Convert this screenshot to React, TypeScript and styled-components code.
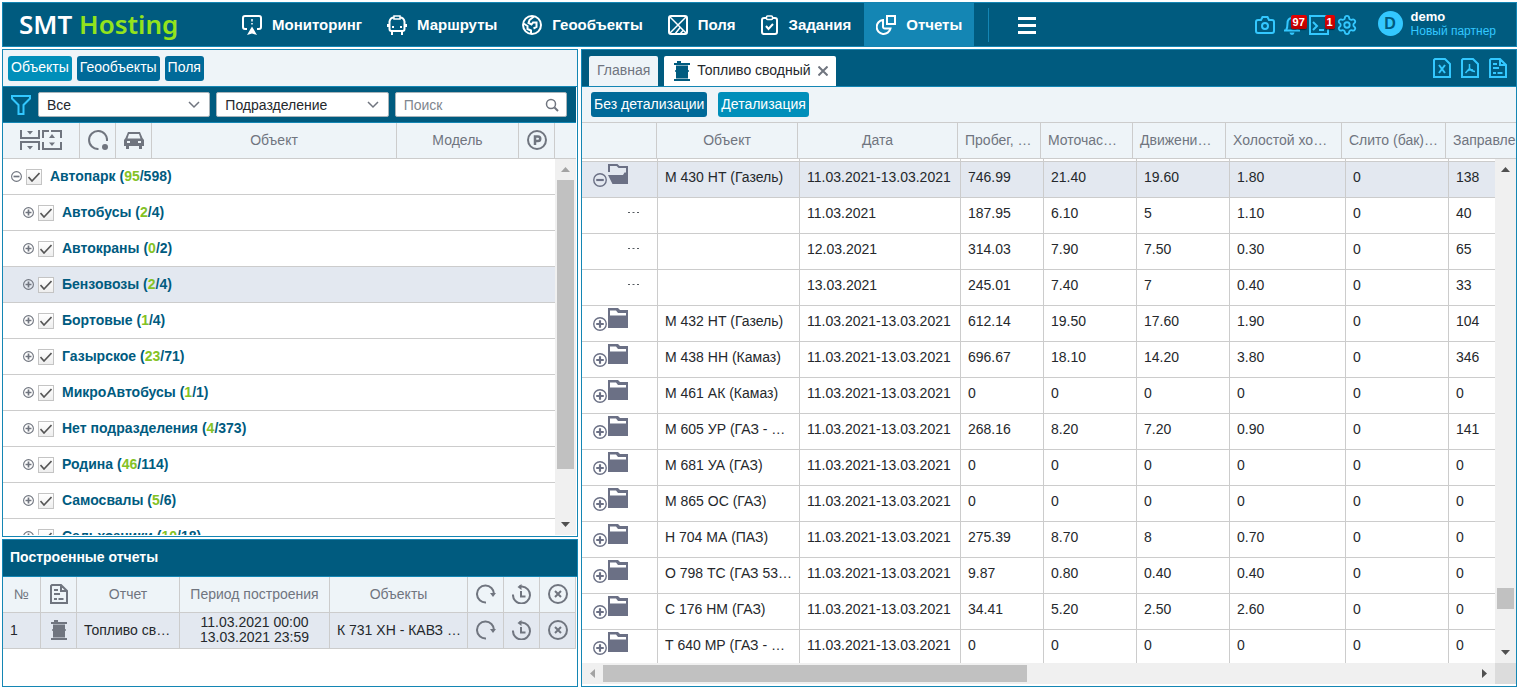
import React from 'react';
import styled, { createGlobalStyle, css } from 'styled-components';
import { Settings } from 'lucide-react';

const color = {
  navy: '#005b7f',
  line: '#1486b4',
  pale: '#eef4f8',
  sky: '#33c8ff',
  grey: '#70757f',
  rule: '#cccccc',
  selected: '#e3e8f0',
  text: '#25282c',
  lime: '#84c225',
};

const GlobalStyle = createGlobalStyle`
  *, *::before, *::after { box-sizing: border-box; }
  body { margin: 0; background: #fff; }
  body, button, input, select, table {
    font-family: "Liberation Sans", Arial, sans-serif;
    font-size: 14px;
    line-height: 16px;
    color: ${color.text};
  }
  button { border: 0; padding: 0; background: none; cursor: pointer; }
  h1, h2, ul, p { margin: 0; padding: 0; }
  ul { list-style: none; }
  a { text-decoration: none; color: inherit; }
  svg { display: block; flex: none; }
`;

/* ---------- icons ---------- */

type IconProps = { w?: number; h?: number; box?: string; sw?: number; children: React.ReactNode };
const Icon = ({ w = 20, h = 20, box, sw = 2, children }: IconProps) => (
  <svg width={w} height={h} viewBox={box ?? `0 0 ${w} ${h}`} fill="none" stroke="currentColor" strokeWidth={sw} aria-hidden="true">
    {children}
  </svg>
);
const fill = { fill: 'currentColor', stroke: 'none' };

const MonitorIcon = () => (
  <Icon>
    <path d="M5 14H3a2 2 0 0 1-2-2V3a2 2 0 0 1 2-2h14a2 2 0 0 1 2 2v9a2 2 0 0 1-2 2h-2" />
    <path d="M10 4v2.500M10 8v1.500" strokeWidth="1.500" />
    <path {...fill} d="M10 11.500L15 20l-5-1.500L5 20z" />
  </Icon>
);
const BusIcon = () => (
  <Icon>
    <path d="M7 2.500C4 2.500 3 4 2.500 6.500V14a2 2 0 0 0 2 2h11a2 2 0 0 0 2-2V6.500C17 4 16 2.500 13 2.500" />
    <path d="M7 1h6v3H7z" strokeWidth="1.500" />
    <path d="M1 9v3M19 9v3M5 16v4M15 16v4" />
    <path {...fill} d="M5 11h2v2H5zM13 11h2v2h-2z" />
  </Icon>
);
const GlobeIcon = () => (
  <Icon>
    <circle cx="10" cy="10" r="9" />
    <path d="M1.500 8.500l4 2.500v3l3.500 1.500v3M12 1.500L7.500 5l-1 3 3 1.500L11 7.500h3.500V12l-3 1.500" />
  </Icon>
);
const FieldIcon = () => (
  <Icon>
    <rect x="1" y="1" width="18" height="18" rx="2" />
    <path d="M2 2l16 16M18 2L2 18M12.500 12L7 19M15.500 15L12 19" strokeWidth="1.500" />
  </Icon>
);
const TaskIcon = () => (
  <Icon w={18}>
    <path d="M5 3H3a2 2 0 0 0-2 2v12a2 2 0 0 0 2 2h11a2 2 0 0 0 2-2V5a2 2 0 0 0-2-2h-2" />
    <rect x="5.500" y="1" width="6" height="3.500" rx="1" strokeWidth="1.500" />
    <path d="M5 11l2.500 3L12 9" />
  </Icon>
);
const ReportIcon = () => (
  <Icon>
    <rect x="11" y="1" width="8" height="8" />
    <path d="M7 5a7 7 0 1 0 7.500 8.500H9A2 2 0 0 1 7 11z" />
  </Icon>
);
const CameraIcon = () => (
  <Icon w={20} h={18}>
    <path d="M3 4h3l1.500-3h5L14 4h3a2 2 0 0 1 2 2v9a2 2 0 0 1-2 2H3a2 2 0 0 1-2-2V6a2 2 0 0 1 2-2z" />
    <circle cx="10" cy="10" r="3" />
  </Icon>
);
const BellIcon = () => (
  <Icon w={18}>
    <path d="M1 15.500h16M3 15.500c1-1.500 1.500-3 1.500-7C4.500 5 6.500 3 9 3s4.500 2 4.500 5.500c0 4 .5 5.500 1.500 7M9 1v2" />
    <path {...fill} d="M6.500 17.500h5a2.500 2.500 0 0 1-5 0z" />
  </Icon>
);
const ConsoleIcon = () => (
  <Icon>
    <rect x="1" y="1" width="18" height="18" />
    <path d="M4 7l4 4-4 4M10 15h5" />
  </Icon>
);
const ExcelIcon = () => (
  <Icon w={18}>
    <path d="M2 1h10l5 5v13H1V2z" />
    <path d="M6 7l6 8M12 7l-6 8" />
  </Icon>
);
const PdfIcon = () => (
  <Icon w={18}>
    <path d="M2 1h10l5 5v13H1V2z" />
    <path d="M8.500 6v4.500l-4 4.500M8.500 10.500c1.500 2 3 3 5.500 3M6 13c2-1 4-1.500 6-1" strokeWidth="1.500" />
  </Icon>
);
const DocIcon = () => (
  <Icon w={18}>
    <path d="M2 1h9l6 6v12H1V2zM11 1v6h6M4 6h4M4 10h6M4 15h3M8.500 15h5" />
  </Icon>
);
const BarrelIcon = () => (
  <Icon w={16} h={20}>
    <path {...fill} d="M3 0h4v2h9v2H0V2h3zM2 4.500h12V9l1 .5v1L14 11v6.500H2V11l-1-.5v-1L2 9zM0 18h16v2H0z" />
  </Icon>
);
const FilterIcon = () => (
  <Icon>
    <path d="M1 1h18v2.500L12.500 10v9h-5v-9L1 3.500z" />
  </Icon>
);
const ChevronIcon = () => (
  <Icon w={12} h={8} sw={1.5}>
    <path d="M1 1l5 5 5-5" />
  </Icon>
);
const SearchIcon = () => (
  <Icon w={14} h={14}>
    <circle cx="6" cy="6" r="4.500" strokeWidth="1.500" />
    <path d="M9.500 9.500l3.500 3.500" />
  </Icon>
);
const CollapseIcon = () => (
  <Icon>
    <path d="M1 0v8h18V0M1 20v-8h18v8" />
    <path {...fill} d="M7 1h6l-3 3.500zM7 16h6l-3 3.500z" />
  </Icon>
);
const ExpandIcon = () => (
  <Icon>
    <path d="M1 8V1h6M9 1h10v7M1 12v7h18v-7" />
    <path {...fill} d="M7 8h6l-3-4zM7 12.500h6L10 16z" />
  </Icon>
);
const StatusIcon = () => (
  <Icon>
    <path d="M10.500 19A9 9 0 1 1 19 11" />
    <circle {...fill} cx="17" cy="17" r="3" />
  </Icon>
);
const CarIcon = () => (
  <Icon w={20} h={18}>
    <path {...fill} fillRule="evenodd" d="M4 1h12l2.500 6L20 9v6h-2v3h-3v-3H5v3H2v-3H0V9l1.500-2zM5 3L3.500 7.500h13L15 3zM3 10v2h3v-2zM14 10v2h3v-2z" />
  </Icon>
);
const ParkingIcon = () => (
  <Icon>
    <circle cx="10" cy="10" r="9" />
    <path d="M8 15V6.500h3a2 2 0 0 1 0 4.500H8" strokeWidth="2.500" />
  </Icon>
);
const RepeatIcon = () => (
  <Icon>
    <path d="M10 18.500A8.500 8.500 0 1 1 18 10" />
    <path {...fill} d="M14 9h6l-3 4z" />
  </Icon>
);
const HistoryIcon = () => (
  <Icon>
    <path d="M1 10.500a8.500 8.500 0 1 0 9-8H7M9 7v5.500h4.500" />
    <path {...fill} d="M9.500 0v6L5.500 3z" />
  </Icon>
);
const CloseRoundIcon = () => (
  <Icon>
    <circle cx="10" cy="10" r="9" />
    <path d="M7 7l6 6M13 7l-6 6" />
  </Icon>
);
const CrossIcon = () => (
  <Icon w={10} h={10}>
    <path d="M0.500 0.500l9 9M9.500 0.500l-9 9" />
  </Icon>
);
const ToggleIcon = ({ open, size }: { open?: boolean; size: number }) => (
  <Icon w={size} h={size} box="0 0 13 13" sw={1.3}>
    <circle cx="6.500" cy="6.500" r="5.800" />
    <path d={open ? 'M3 6.500h7' : 'M3 6.500h7M6.500 3v7'} strokeWidth="2" />
  </Icon>
);
const FolderIcon = ({ open }: { open?: boolean }) => (
  <Icon>
    {open ? (
      <>
        <path d="M1 8V1h8l2 2h8v16" />
        <path {...fill} d="M0 11h15l1.500-2.500H20V20H4.500z" />
      </>
    ) : (
      <path {...fill} fillRule="evenodd" d="M0 0h10l2 2h8v18H0zM2 2.500v5h16V5h-8L8 2.500z" />
    )}
  </Icon>
);
const DotsIcon = () => (
  <Icon w={11} h={1} sw={1}>
    <path d="M0 0.500h11" strokeDasharray="2 2.500" />
  </Icon>
);
const CheckIcon = () => (
  <Icon w={12} h={10} sw={1.6}>
    <path d="M0.500 5l3.500 4L11.500 1" />
  </Icon>
);

/* ---------- frame ---------- */

const Page = styled.div`
  height: 100vh;
  min-height: 480px;
  display: flex;
  flex-direction: column;
  gap: 2px;
  padding: 2px 2px 3px;
`;

const Header = styled.header`
  display: flex;
  align-items: stretch;
  height: 45px;
  flex: none;
  background: ${color.navy};
  border: 1px solid ${color.line};
  overflow: hidden;
`;
const Logo = styled.h1`
  width: 227px;
  flex: none;
  padding-left: 16px;
  font: 600 26px/42px "Noto Sans", sans-serif;
  color: #fff;
  white-space: nowrap;
  span { color: #93e31c; }
`;
const Nav = styled.nav`
  display: flex;
  flex: none;
  gap: 1px;
`;
const NavLink = styled.a<{ $active?: boolean }>`
  display: flex;
  align-items: center;
  gap: 10px;
  padding: 0 12px;
  font-size: 15px;
  font-weight: 700;
  line-height: 20px;
  color: #fff;
  background: ${(p) => (p.$active ? color.line : 'transparent')};
`;
const MenuArea = styled.div`
  display: flex;
  align-items: center;
  margin: 5px 0 4px 14px;
  padding-left: 29px;
  border-left: 1px solid ${color.line};
  color: #fff;
`;
const HeaderTools = styled.div`
  display: flex;
  align-items: center;
  gap: 8px;
  margin-left: auto;
  color: ${color.sky};
`;
const ToolButton = styled.button`
  position: relative;
  color: inherit;
`;
const Badge = styled.span<{ $shift: number }>`
  position: absolute;
  top: 0;
  left: ${(p) => p.$shift}px;
  padding: 0 2px;
  font-size: 11px;
  font-weight: 700;
  line-height: 14px;
  color: #fff;
  background: linear-gradient(#e60000, #b80000);
  border-radius: 2px;
  box-shadow: 0 1px 1px rgba(0, 0, 0, 0.5);
`;
const UserBox = styled.div`
  display: flex;
  align-items: center;
  gap: 8px;
  padding: 0 20px 2px 13px;
  font-size: 12px;
  line-height: 14px;
  b { display: block; color: #fff; font-size: 13px; }
`;
const Avatar = styled.span`
  width: 25px;
  height: 25px;
  border-radius: 50%;
  background: ${color.sky};
  color: ${color.navy};
  font-size: 16px;
  font-weight: 700;
  line-height: 25px;
  text-align: center;
`;

const Main = styled.main`
  flex: 1;
  min-height: 0;
  display: grid;
  grid-template-columns: minmax(0, 8fr) minmax(0, 13fr);
  gap: 3px;
`;
const LeftColumn = styled.div`
  min-height: 0;
  display: grid;
  grid-template-rows: minmax(0, 1fr) 148px;
  gap: 2px;
`;
const Panel = styled.section`
  min-height: 0;
  display: flex;
  flex-direction: column;
  border: 1px solid ${color.line};
  background: #fff;
  overflow: hidden;
`;

/* ---------- bars and buttons ---------- */

const Bar = styled.div<{ $dark?: boolean; $ruled?: boolean }>`
  display: flex;
  align-items: center;
  height: 36px;
  flex: none;
  background: ${(p) => (p.$dark ? color.navy : color.pale)};
  border-bottom: 1px solid ${(p) => (p.$ruled ? color.rule : color.line)};
`;
const ScopeBar = styled(Bar)`
  height: 37px;
  gap: 5px;
  padding: 0 5px;
`;
const DetailBar = styled(Bar)`
  gap: 11px;
  padding: 0 9px;
`;
const FilterBar = styled(Bar)`
  gap: 6px;
  margin-right: 1px;
  padding: 0 9px 0 8px;
  color: ${color.sky};
`;
const FilterMark = styled.span`
  width: 21px;
`;
const TitleBar = styled(Bar)`
  height: 37px;
  padding: 0 7px 2px;
`;
const PushButton = styled.button<{ $on?: boolean }>`
  height: 25px;
  padding: 0 3px 2px;
  border-radius: 3px;
  color: #fff;
  white-space: nowrap;
  background: ${(p) => (p.$on ? '#008fba' : '#006a99')};
`;
const Field = styled.label`
  flex: 1;
  min-width: 0;
  display: grid;
  grid-template-columns: minmax(0, 1fr) 21px;
  align-items: center;
  height: 25px;
  background: #fff;
  border: 1px solid #a9b4ba;
  border-radius: 2px;
  color: ${color.grey};
  svg { grid-area: 1 / 2; pointer-events: none; }
`;
const control = css`
  grid-area: 1 / 1 / 2 / 3;
  width: 100%;
  height: 23px;
  border: 0;
  padding: 0 24px 0 8px;
  background: transparent;
  appearance: none;
  outline: none;
`;
const Select = styled.select`${control}`;
const SearchInput = styled.input`
  ${control}
  &::placeholder { color: #80868e; opacity: 1; }
`;

/* ---------- tree ---------- */

const TreeHead = styled.div`
  display: grid;
  grid-template-columns: 77px 36px 36px minmax(0, 1fr) 122px 36px 21px;
  height: 36px;
  flex: none;
  margin-right: 1px;
  background: ${color.pale};
  border-bottom: 1px solid ${color.rule};
  color: ${color.grey};
`;
const TreeHeadCell = styled.div`
  display: flex;
  align-items: center;
  justify-content: center;
  gap: 2px;
  padding-bottom: 2px;
  border-right: 1px solid ${color.rule};
  &:last-child { border-right: 0; }
`;
const TreeBody = styled.div`
  flex: 1;
  min-height: 0;
  display: grid;
  grid-template-columns: minmax(0, 1fr) 21px;
  padding: 0 1px 1px 0;
`;
const TreeList = styled.ul`
  overflow: hidden;
`;
const TreeRow = styled.li<{ $root?: boolean; $selected?: boolean }>`
  display: flex;
  align-items: center;
  height: 36px;
  padding-left: ${(p) => (p.$root ? 8 : 20)}px;
  border-bottom: 1px solid ${color.rule};
  background: ${(p) => (p.$selected ? color.selected : '#fff')};
  font-weight: 700;
  color: ${color.navy};
  white-space: nowrap;
  button { color: ${color.grey}; }
  em { font-style: normal; color: ${color.lime}; }
`;
const CheckLabel = styled.label`
  display: flex;
  align-items: center;
  gap: 8px;
  padding-left: 4px;
`;
const TreeText = styled.span`
  padding-bottom: 2px;
`;
const CheckBox = styled.span`
  display: grid;
  place-items: center;
  color: #555;
  > * { grid-area: 1 / 1; }
  svg { pointer-events: none; }
`;
const CheckInput = styled.input`
  appearance: none;
  width: 16px;
  height: 16px;
  margin: 0;
  border: 1px solid #c4c4c4;
  background: linear-gradient(#fff, #eee);
`;

/* ---------- scroll bars ---------- */

const ScrollTrack = styled.div<{ $horizontal?: boolean }>`
  display: flex;
  flex-direction: ${(p) => (p.$horizontal ? 'row' : 'column')};
  min-width: 0;
  min-height: 0;
  background: #f0f0f0;
`;
const ScrollArrow = styled.button<{ $idle?: boolean }>`
  width: 21px;
  height: 21px;
  flex: none;
  display: grid;
  place-items: center;
  color: ${(p) => (p.$idle ? '#a3a3a3' : '#505050')};
`;
const ScrollPart = styled.div<{ $grow: number; $thumb?: boolean }>`
  flex: ${(p) => p.$grow} 1 0;
  background: ${(p) => (p.$thumb ? '#c1c1c1' : 'transparent')};
`;
const ThumbLane = styled.div<{ $horizontal?: boolean }>`
  flex: 1;
  display: flex;
  flex-direction: ${(p) => (p.$horizontal ? 'row' : 'column')};
  padding: ${(p) => (p.$horizontal ? '2px 0' : '0 2px')};
`;
const ScrollCorner = styled.div`
  background: #dcdcdc;
`;

const arrowPaths = {
  up: 'M0 7h9L4.500 2z',
  down: 'M0 2h9L4.500 7z',
  left: 'M7 0v9L2 4.500z',
  right: 'M2 0v9l5-4.500z',
};
const Arrow = ({ dir }: { dir: keyof typeof arrowPaths }) => (
  <Icon w={9} h={9}><path {...fill} d={arrowPaths[dir]} /></Icon>
);

type ScrollProps = { horizontal?: boolean; before: number; thumb: number; after: number };
const Scroll = ({ horizontal, before, thumb, after }: ScrollProps) => (
  <ScrollTrack $horizontal={horizontal}>
    <ScrollArrow $idle={before === 0} aria-label={horizontal ? 'Влево' : 'Вверх'}>
      <Arrow dir={horizontal ? 'left' : 'up'} />
    </ScrollArrow>
    <ThumbLane $horizontal={horizontal}>
      <ScrollPart $grow={before} />
      <ScrollPart $grow={thumb} $thumb />
      <ScrollPart $grow={after} />
    </ThumbLane>
    <ScrollArrow aria-label={horizontal ? 'Вправо' : 'Вниз'}>
      <Arrow dir={horizontal ? 'right' : 'down'} />
    </ScrollArrow>
  </ScrollTrack>
);

/* ---------- tables ---------- */

const Table = styled.table`
  width: 100%;
  flex: none;
  table-layout: fixed;
  border-collapse: separate;
  border-spacing: 0;
  th, td {
    border-right: 1px solid ${color.rule};
    border-bottom: 1px solid ${color.rule};
    white-space: nowrap;
    overflow: hidden;
    font-weight: 400;
  }
`;
const BuiltTable = styled(Table)`
  width: calc(100% - 1px);
  th, td { height: 36px; padding: 0 0 1px; text-align: center; }
  th { background: ${color.pale}; color: ${color.grey}; }
  td { background: ${color.selected}; }
  td:first-child, td:nth-child(3), td:nth-child(5) { text-align: left; padding-left: 7px; }
  p { line-height: 15px; }
`;
const IconSlot = styled.span`
  display: grid;
  place-items: center;
  color: ${color.grey};
`;
const IconButton = styled.button`
  color: ${color.grey};
  vertical-align: middle;
`;
const PanelTitle = styled.h2`
  font-size: 14px;
  font-weight: 700;
  color: #fff;
`;

const TabBar = styled(Bar)`
  height: 37px;
  align-items: flex-end;
  gap: 6px;
  padding: 0 9px 0 7px;
`;
const Tab = styled.button<{ $active?: boolean }>`
  display: flex;
  align-items: center;
  gap: 7px;
  height: 30px;
  padding: 0 8px;
  border-radius: 2px 2px 0 0;
  background: ${(p) => (p.$active ? '#fff' : color.pale)};
  color: ${(p) => (p.$active ? color.text : color.grey)};
  svg:first-child { color: ${color.navy}; margin-left: 2px; }
  svg:last-child { color: ${color.grey}; }
  span { padding-bottom: 2px; }
`;
const TabTools = styled.div`
  display: flex;
  align-items: center;
  align-self: center;
  gap: 10px;
  margin-left: auto;
  color: ${color.sky};
  button { color: inherit; }
`;

const HeadTable = styled(Table)`
  th {
    height: 36px;
    padding: 0 0 2px 7px;
    color: ${color.grey};
    background: ${color.pale};
    text-align: left;
  }
  th:nth-child(2), th:nth-child(3) { text-align: center; padding: 0 0 2px; }
  th:last-child { border-right: 0; }
`;
const ReportArea = styled.div`
  flex: 1;
  min-height: 0;
  display: grid;
  grid-template-columns: minmax(0, 1fr) 21px;
  grid-template-rows: minmax(0, 1fr) 21px;
  padding-bottom: 2px;
`;
const ReportRows = styled.div`
  overflow: hidden;
`;
const BodyTable = styled(Table)`
  td { height: 36px; padding: 7px 0 0 7px; vertical-align: top; }
  td:first-child { padding: 2px 0 0 11px; }
  td:last-child { border-right: 0; }
`;
const SpacerRow = styled.tr`
  && td { height: 3px; padding: 0; }
`;
const DataRow = styled.tr<{ $selected?: boolean }>`
  background: ${(p) => (p.$selected ? color.selected : '#fff')};
`;
const FolderCell = styled.span`
  display: flex;
  align-items: flex-start;
  gap: 1px;
  color: #6b7085;
  button { color: inherit; padding-top: 9px; }
`;
const DotsCell = styled.span`
  display: block;
  padding: 12px 0 0 35px;
  color: #555a60;
`;

/* ---------- data ---------- */

const nav = [
  ['Мониторинг', MonitorIcon],
  ['Маршруты', BusIcon],
  ['Геообъекты', GlobeIcon],
  ['Поля', FieldIcon],
  ['Задания', TaskIcon],
  ['Отчеты', ReportIcon],
] as const;

const groups: [string, number, number][] = [
  ['Автопарк', 95, 598],
  ['Автобусы', 2, 4],
  ['Автокраны', 0, 2],
  ['Бензовозы', 2, 4],
  ['Бортовые', 1, 4],
  ['Газырское', 23, 71],
  ['МикроАвтобусы', 1, 1],
  ['Нет подразделения', 4, 373],
  ['Родина', 46, 114],
  ['Самосвалы', 5, 6],
  ['Сельхозники', 10, 18],
];

const headWidths = [75, 141, 160, 83, 92, 93, 116, 104];
const bodyWidths = [76, 142, 161, 83, 93, 93, 116, 103];
const headings = ['', 'Объект', 'Дата', 'Пробег, …', 'Моточас…', 'Движени…', 'Холостой хо…', 'Слито (бак)…', 'Заправлено'];

const period = '11.03.2021-13.03.2021';
const zeros = ['0', '0', '0', '0', '0', '0'];
const rows: string[][] = [
  ['М 430 НТ (Газель)', period, '746.99', '21.40', '19.60', '1.80', '0', '138'],
  ['', '11.03.2021', '187.95', '6.10', '5', '1.10', '0', '40'],
  ['', '12.03.2021', '314.03', '7.90', '7.50', '0.30', '0', '65'],
  ['', '13.03.2021', '245.01', '7.40', '7', '0.40', '0', '33'],
  ['М 432 НТ (Газель)', period, '612.14', '19.50', '17.60', '1.90', '0', '104'],
  ['М 438 НН (Камаз)', period, '696.67', '18.10', '14.20', '3.80', '0', '346'],
  ['М 461 АК (Камаз)', period, ...zeros],
  ['М 605 УР (ГАЗ - …', period, '268.16', '8.20', '7.20', '0.90', '0', '141'],
  ['М 681 УА (ГАЗ)', period, ...zeros],
  ['М 865 ОС (ГАЗ)', period, ...zeros],
  ['Н 704 МА (ПАЗ)', period, '275.39', '8.70', '8', '0.70', '0', '0'],
  ['О 798 ТС (ГАЗ 53…', period, '9.87', '0.80', '0.40', '0.40', '0', '0'],
  ['С 176 НМ (ГАЗ)', period, '34.41', '5.20', '2.50', '2.60', '0', '0'],
  ['Т 640 МР (ГАЗ - …', period, ...zeros],
];

const Columns = ({ widths }: { widths: number[] }) => (
  <colgroup>
    {widths.map((w, i) => <col key={i} width={w || undefined} />)}
  </colgroup>
);

/* ---------- parts ---------- */

const TopHeader = () => (
  <Header>
    <Logo>SMT <span>Hosting</span></Logo>
    <Nav>
      {nav.map(([label, NavIcon]) => (
        <NavLink key={label} href="#" $active={label === 'Отчеты'}><NavIcon />{label}</NavLink>
      ))}
    </Nav>
    <MenuArea>
      <ToolButton aria-label="Меню">
        <Icon w={18} h={17} sw={3}><path d="M0 1.500h18M0 8.500h18M0 15.500h18" /></Icon>
      </ToolButton>
    </MenuArea>
    <HeaderTools>
      <ToolButton aria-label="Снимок"><CameraIcon /></ToolButton>
      <ToolButton aria-label="Уведомления"><BellIcon /><Badge $shift={8}>97</Badge></ToolButton>
      <ToolButton aria-label="Команды"><ConsoleIcon /><Badge $shift={16}>1</Badge></ToolButton>
      <ToolButton aria-label="Настройки"><Settings width={20} height={20} viewBox="1 1 22 22" /></ToolButton>
      <UserBox>
        <Avatar>D</Avatar>
        <div><b>demo</b>Новый партнер</div>
      </UserBox>
    </HeaderTools>
  </Header>
);

const ObjectsPanel = () => (
  <Panel>
    <ScopeBar>
      <PushButton $on>Объекты</PushButton>
      <PushButton>Геообъекты</PushButton>
      <PushButton>Поля</PushButton>
    </ScopeBar>
    <FilterBar $dark>
      <FilterMark><FilterIcon /></FilterMark>
      <Field>
        <Select aria-label="Фильтр"><option>Все</option></Select>
        <ChevronIcon />
      </Field>
      <Field>
        <Select aria-label="Группировка"><option>Подразделение</option></Select>
        <ChevronIcon />
      </Field>
      <Field>
        <SearchInput aria-label="Поиск" placeholder="Поиск" />
        <SearchIcon />
      </Field>
    </FilterBar>
    <TreeHead>
      <TreeHeadCell><CollapseIcon /><ExpandIcon /></TreeHeadCell>
      <TreeHeadCell><StatusIcon /></TreeHeadCell>
      <TreeHeadCell><CarIcon /></TreeHeadCell>
      <TreeHeadCell>Объект</TreeHeadCell>
      <TreeHeadCell>Модель</TreeHeadCell>
      <TreeHeadCell><ParkingIcon /></TreeHeadCell>
      <TreeHeadCell />
    </TreeHead>
    <TreeBody>
      <TreeList>
        {groups.map(([name, online, total], i) => (
          <TreeRow key={name} $root={i === 0} $selected={name === 'Бензовозы'}>
            <button aria-label={i === 0 ? 'Свернуть' : 'Развернуть'}><ToggleIcon size={11} open={i === 0} /></button>
            <CheckLabel>
              <CheckBox><CheckInput type="checkbox" defaultChecked /><CheckIcon /></CheckBox>
              <TreeText>{name} (<em>{online}</em>/{total})</TreeText>
            </CheckLabel>
          </TreeRow>
        ))}
      </TreeList>
      <Scroll before={0} thumb={289} after={45} />
    </TreeBody>
  </Panel>
);

const BuiltReports = () => (
  <Panel>
    <TitleBar $dark><PanelTitle>Построенные отчеты</PanelTitle></TitleBar>
    <BuiltTable>
      <Columns widths={[38, 36, 103, 150, 0, 36, 36, 36]} />
      <thead>
        <tr>
          <th>№</th>
          <th><IconSlot><DocIcon /></IconSlot></th>
          <th>Отчет</th>
          <th>Период построения</th>
          <th>Объекты</th>
          <th><IconSlot><RepeatIcon /></IconSlot></th>
          <th><IconSlot><HistoryIcon /></IconSlot></th>
          <th><IconSlot><CloseRoundIcon /></IconSlot></th>
        </tr>
      </thead>
      <tbody>
        <tr>
          <td>1</td>
          <td><IconSlot><BarrelIcon /></IconSlot></td>
          <td>Топливо св…</td>
          <td><p>11.03.2021 00:00</p><p>13.03.2021 23:59</p></td>
          <td>К 731 ХН - КАВЗ …</td>
          <td><IconButton aria-label="Повторить"><RepeatIcon /></IconButton></td>
          <td><IconButton aria-label="История"><HistoryIcon /></IconButton></td>
          <td><IconButton aria-label="Удалить"><CloseRoundIcon /></IconButton></td>
        </tr>
      </tbody>
    </BuiltTable>
  </Panel>
);

const ReportPanel = () => (
  <Panel>
    <TabBar $dark>
      <Tab><span>Главная</span></Tab>
      <Tab $active><BarrelIcon /><span>Топливо сводный</span><CrossIcon /></Tab>
      <TabTools>
        <button aria-label="Excel"><ExcelIcon /></button>
        <button aria-label="PDF"><PdfIcon /></button>
        <button aria-label="Документ"><DocIcon /></button>
      </TabTools>
    </TabBar>
    <DetailBar $ruled>
      <PushButton>Без детализации</PushButton>
      <PushButton $on>Детализация</PushButton>
    </DetailBar>
    <HeadTable>
      <Columns widths={[...headWidths, 0]} />
      <thead>
        <tr>{headings.map((h, i) => <th key={i}>{h}</th>)}</tr>
      </thead>
    </HeadTable>
    <ReportArea>
      <ReportRows>
        <BodyTable>
          <Columns widths={[...bodyWidths, 0]} />
          <tbody>
            <SpacerRow>{headings.map((_, i) => <td key={i} />)}</SpacerRow>
            {rows.map((cells, r) => (
              <DataRow key={r} $selected={r === 0}>
                <td>
                  {cells[0] ? (
                    <FolderCell>
                      <button aria-label={r === 0 ? 'Свернуть' : 'Развернуть'}><ToggleIcon size={14} open={r === 0} /></button>
                      <FolderIcon open={r === 0} />
                    </FolderCell>
                  ) : (
                    <DotsCell><DotsIcon /></DotsCell>
                  )}
                </td>
                {cells.map((c, i) => <td key={i}>{c}</td>)}
              </DataRow>
            ))}
          </tbody>
        </BodyTable>
      </ReportRows>
      <Scroll before={408} thumb={21} after={33} />
      <Scroll horizontal before={0} thumb={424} after={447} />
      <ScrollCorner />
    </ReportArea>
  </Panel>
);

export default function App() {
  return (
    <>
      <GlobalStyle />
      <Page>
        <TopHeader />
        <Main>
          <LeftColumn>
            <ObjectsPanel />
            <BuiltReports />
          </LeftColumn>
          <ReportPanel />
        </Main>
      </Page>
    </>
  );
}
